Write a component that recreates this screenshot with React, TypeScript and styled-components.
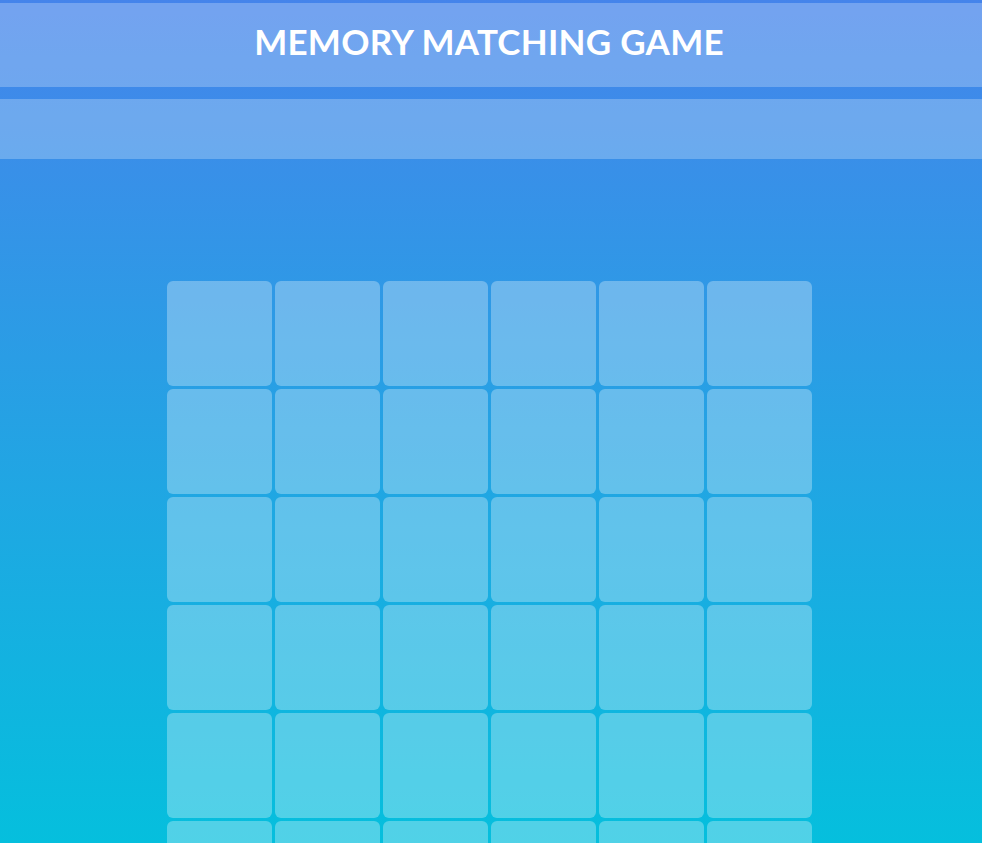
import React from "react";
import styled, { createGlobalStyle } from "styled-components";

const Global = createGlobalStyle`
  html, body { margin: 0; padding: 0; }
  body {
    min-height: 100vh;
    background: linear-gradient(180deg, #4584eb 0%, #05bfdd 100%) fixed;
    font-family: Lato, "Open Sans", sans-serif;
  }
`;

const Page = styled.div`
  padding-top: 3px;
  display: flex;
  flex-direction: column;
`;

const Header = styled.header`
  height: 84px;
  display: flex;
  align-items: center;
  justify-content: center;
  background: rgba(255, 255, 255, 0.25);
`;

const Title = styled.h1`
  margin: 0 4px 8px 0;
  color: #fff;
  font-family: Lato, sans-serif;
  font-weight: 700;
  font-size: 35px;
  letter-spacing: 0.25px;
`;

const InfoBar = styled.div`
  margin-top: 12px;
  height: 60px;
  background: rgba(255, 255, 255, 0.25);
`;

const Board = styled.div`
  margin: 122px auto 0;
  width: 648px;
  display: grid;
  grid-template-columns: repeat(6, 105px);
  grid-auto-rows: 105px;
  gap: 3px;
`;

const Card = styled.div`
  border-radius: 6px;
  background: rgba(255, 255, 255, 0.3);
`;

export default function App() {
  return (
    <>
      <Global />
      <Page>
        <Header>
          <Title>MEMORY MATCHING GAME</Title>
        </Header>
        <InfoBar />
        <Board>
          {Array.from({ length: 36 }).map((_, i) => (
            <Card key={i} />
          ))}
        </Board>
      </Page>
    </>
  );
}
